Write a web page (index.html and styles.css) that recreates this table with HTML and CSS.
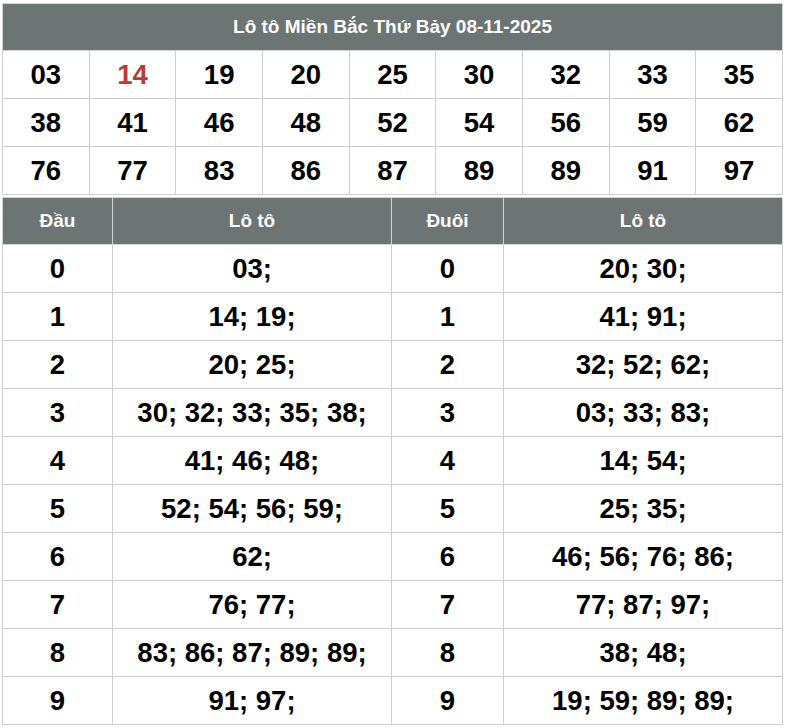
FILE: index.html
```html
<!DOCTYPE html>
<html lang="vi">
<head>
<meta charset="utf-8">
<title>Lô tô Miền Bắc</title>
<link rel="stylesheet" href="styles.css">
</head>
<body>
<div class="wrap">
  <table class="loto">
    <thead>
      <tr><th colspan="9" class="title">Lô tô Miền Bắc Thứ Bảy 08-11-2025</th></tr>
    </thead>
    <tbody>
      <tr><td>03</td><td class="red">14</td><td>19</td><td>20</td><td>25</td><td>30</td><td>32</td><td>33</td><td>35</td></tr>
      <tr><td>38</td><td>41</td><td>46</td><td>48</td><td>52</td><td>54</td><td>56</td><td>59</td><td>62</td></tr>
      <tr><td>76</td><td>77</td><td>83</td><td>86</td><td>87</td><td>89</td><td>89</td><td>91</td><td>97</td></tr>
    </tbody>
  </table>
  <table class="dauduoi">
    <colgroup>
      <col class="c-key"><col class="c-val"><col class="c-key2"><col class="c-val">
    </colgroup>
    <thead>
      <tr><th>Đầu</th><th>Lô tô</th><th>Đuôi</th><th>Lô tô</th></tr>
    </thead>
    <tbody>
      <tr><td>0</td><td>03;</td><td>0</td><td>20; 30;</td></tr>
      <tr><td>1</td><td>14; 19;</td><td>1</td><td>41; 91;</td></tr>
      <tr><td>2</td><td>20; 25;</td><td>2</td><td>32; 52; 62;</td></tr>
      <tr><td>3</td><td>30; 32; 33; 35; 38;</td><td>3</td><td>03; 33; 83;</td></tr>
      <tr><td>4</td><td>41; 46; 48;</td><td>4</td><td>14; 54;</td></tr>
      <tr><td>5</td><td>52; 54; 56; 59;</td><td>5</td><td>25; 35;</td></tr>
      <tr><td>6</td><td>62;</td><td>6</td><td>46; 56; 76; 86;</td></tr>
      <tr><td>7</td><td>76; 77;</td><td>7</td><td>77; 87; 97;</td></tr>
      <tr><td>8</td><td>83; 86; 87; 89; 89;</td><td>8</td><td>38; 48;</td></tr>
      <tr><td>9</td><td>91; 97;</td><td>9</td><td>19; 59; 89; 89;</td></tr>
    </tbody>
  </table>
</div>
</body>
</html>
```
FILE: styles.css
```css
html, body {
  margin: 0;
  padding: 0;
  background: #ffffff;
}
body {
  font-family: "Liberation Sans", Arial, sans-serif;
  color: #000;
}
.wrap {
  padding: 3px 2px 0 2px;
  width: 781px;
}
table {
  width: 781px;
  border-collapse: collapse;
  table-layout: fixed;
}
th, td {
  border: 1px solid #cfcfcf;
  text-align: center;
  padding: 0;
  font-weight: bold;
}
th {
  background: #6c7474;
  color: #ffffff;
  font-size: 19px;
  border-color: #d4d4d4;
}
.loto .title {
  height: 46px;
  font-size: 19px;
}
.loto td {
  height: 47px;
  font-size: 27.5px;
}
.loto td.red {
  color: #c0392b;
}
.dauduoi {
  margin-top: 2px;
}
.dauduoi th {
  height: 46px;
}
.dauduoi td {
  height: 47px;
  font-size: 27.5px;
}
.c-key { width: 110px; }
.c-key2 { width: 112px; }
.c-val { width: auto; }
```
